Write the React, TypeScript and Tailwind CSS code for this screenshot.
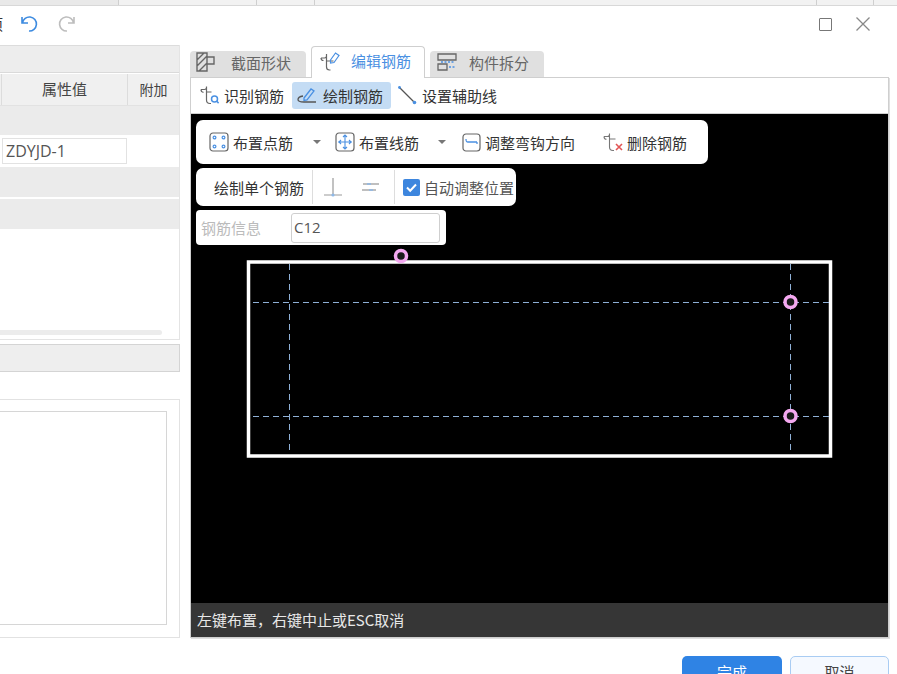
import React from 'react';

const font = { fontFamily: '"Noto Sans CJK SC", "Liberation Sans", sans-serif' };

function Rebar({ accent = '#4a90e2' }: { accent?: string }) {
  return (
    <svg width="20" height="20" viewBox="0 0 20 20" fill="none" strokeWidth="1.2">
      <path d="M1 4.5h3.5a2 2 0 0 0 2-2V1.5M1 4.5c0 2 1 2.8 2.5 2.8M6.5 1.5V15c0 2.2 1.5 3.5 3.5 3.5h1M6.5 7h5" stroke="#666" />
      <circle cx="14.5" cy="14" r="3" stroke={accent} strokeWidth="1.5" />
      <path d="M16.8 16.3l1.8 1.8" stroke={accent} strokeWidth="1.5" />
    </svg>
  );
}

function Tool({ icon, label, active }: { icon: React.ReactNode; label: string; active?: boolean }) {
  return (
    <div className={`flex items-center gap-1 h-[27px] pl-[2px] rounded-[3px] ${active ? 'bg-[#c4dcf4] pr-[8px]' : 'pr-[2px]'}`}>
      {icon}
      <span className="text-[15px] text-[#333] leading-none whitespace-nowrap">{label}</span>
    </div>
  );
}

function Caret({ className }: { className: string }) {
  return <span className={`w-0 h-0 border-x-[4px] border-x-transparent border-t-[4px] border-t-[#777] ${className}`} />;
}

// drawing on the black canvas, coordinates are the page's minus the canvas origin
function Section() {
  const pink = '#f4a8f0';
  const dash = '#8fb0d6';
  return (
    <svg className="absolute left-0 top-0" width="697" height="489" viewBox="191 114 697 489" fill="none">
      <rect x="248.5" y="262" width="582" height="194" stroke="#fff" strokeWidth="3.5" />
      <path d="M289.5 264v190M790.5 264v190M253 302.5h576M253 416.5h576" stroke={dash} strokeWidth="1" strokeDasharray="6 4" />
      <circle cx="401" cy="256" r="5.5" fill="#1a1a1a" stroke={pink} strokeWidth="3.5" />
      <circle cx="790.5" cy="302" r="5.5" fill="#1a1a1a" stroke={pink} strokeWidth="3.5" />
      <circle cx="790.5" cy="416" r="5.5" fill="#1a1a1a" stroke={pink} strokeWidth="3.5" />
    </svg>
  );
}

export default function App() {
  return (
    <div className="w-[897px] h-[674px] overflow-hidden bg-white flex flex-col" style={font}>
      {/* window behind the dialog */}
      <div className="h-[6px] bg-[#f2f2f2] border-b border-[#d8d8d8] shrink-0 flex">
        <div className="w-[118px] bg-[#e9e9e9]" />
        <div className="w-[139px] border-x border-[#cfcfcf]" />
        <div className="w-[58px] border-r border-[#cfcfcf]" />
        <div className="w-[502px] border-r border-[#cfcfcf]" />
        <div className="w-[57px] border-r border-[#cfcfcf]" />
      </div>

      {/* title bar */}
      <div className="h-[39px] shrink-0 flex items-center pb-[3px]">
        <span className="text-[15px] text-[#333] ml-[-12px] w-[32px]">项</span>
        <svg width="18" height="18" viewBox="0 0 18 18" fill="none" stroke="#3d8be0" strokeWidth="1.6">
          <path d="M2 2v6h6M2.5 8A7 7 0 1 1 9 16" />
        </svg>
        <svg className="ml-[20px]" width="18" height="18" viewBox="0 0 18 18" fill="none" stroke="#bdbdbd" strokeWidth="1.6">
          <path d="M16 2v6h-6M15.5 8A7 7 0 1 0 9 16" />
        </svg>
        <div className="ml-auto mr-[24px] w-[13px] h-[13px] border-[1.5px] border-[#777] rounded-[1px]" />
        <svg className="mr-[27px]" width="14" height="14" viewBox="0 0 14 14" stroke="#888" strokeWidth="1.3">
          <path d="M0.5 0.5l13 13M13.5 0.5l-13 13" />
        </svg>
      </div>

      {/* body */}
      <div className="h-[593px] shrink-0 flex">
        {/* properties column */}
        <div className="w-[180px] shrink-0 flex flex-col">
          <div className="h-[295px] border-r border-b border-[#e4e4e4] flex flex-col">
            <div className="h-[28px] bg-[#ededed] border-t border-[#dcdcdc] border-b border-b-[#dadada]" />
            <div className="h-[32px] mt-px bg-[#f0f0f0] flex text-[15px] text-[#444] border-b border-[#e2e2e2]">
              <div className="w-[2px] border-r border-[#dcdcdc]" />
              <div className="w-[126px] border-r border-[#dcdcdc] flex items-center justify-center">属性值</div>
              <div className="flex-1 flex items-center justify-center text-[14px]">附加</div>
            </div>
            <div className="h-[29px] bg-[#ebebeb]" />
            <div className="h-[32px] flex items-center pl-[2px]">
              <div className="w-[125px] h-[26px] border border-[#e2e2e2] px-[3px] flex items-center text-[16px] text-[#555]">
                <span style={{ fontFamily: '"Open Sans", "Liberation Sans", sans-serif' }}>ZDYJD-1</span>
              </div>
            </div>
            <div className="h-[30px] bg-[#ebebeb]" />
            <div className="h-[30px] mt-[2px] bg-[#ebebeb]" />
            <div className="mt-auto mb-[4px] h-[5px] w-[162px] bg-[#ececec] rounded-r-[3px]" />
          </div>
          <div className="h-[28px] mt-[4px] bg-[#eeeeee] border border-l-0 border-[#d4d4d4]" />
          <div className="h-[27px]" />
          <div className="flex-1 border-t border-r border-b border-[#e2e2e2] pt-[11px] pb-[12px]">
            <div className="w-[167px] h-full border-t border-r border-b border-[#d6d6d6]" />
          </div>
        </div>

        {/* section editor */}
        <div className="w-[699px] ml-[10px] shrink-0 flex flex-col">
          <div className="h-[32px] flex items-end shrink-0">
            <div className="w-[116px] h-[26px] bg-[#e0e0e0] rounded-t-[4px] flex items-center pl-[6px] pb-[4px]">
              <svg width="20" height="20" viewBox="0 0 20 20" fill="none" stroke="#666" strokeWidth="1.4">
                <path d="M1 1h10v18H1zM11 5h7v7h-7M1 8l7-7M1 14L11 4M3 19l8-8" />
              </svg>
              <span className="ml-[15px] text-[15px] text-[#666] leading-none">截面形状</span>
            </div>
            <div className="w-[114px] h-[32px] ml-[5px] bg-white border border-b-0 border-[#cfcfcf] rounded-t-[4px] flex items-center pl-[8px] pb-[4px] relative z-10 mb-[-1px]">
              <svg width="20" height="20" viewBox="0 0 20 20" fill="none" strokeWidth="1.2">
                <path d="M1 7h3.5a2 2 0 0 0 2-2V3M1 7c0 2 1 2.5 2.5 2.5M6.5 3v13c0 2 1.5 3 3 3h1M6.5 10h7" stroke="#666" />
                <path d="M10.5 9l5-7 3.5 2.5-5 7-3.5 .5z" stroke="#4a90e2" />
              </svg>
              <span className="ml-[11px] text-[15px] text-[#4a90e2] leading-none">编辑钢筋</span>
            </div>
            <div className="w-[114px] h-[26px] ml-[5px] bg-[#e0e0e0] rounded-t-[4px] flex items-center pl-[7px] pb-[4px]">
              <svg width="20" height="20" viewBox="0 0 20 20" fill="none" stroke="#666" strokeWidth="1.3">
                <path d="M1 2h18v6H1zM1 12h9v6H1z" />
                <path d="M12 15h7M4 10h14" stroke="#4a90e2" strokeDasharray="2 1.5" />
              </svg>
              <span className="ml-[12px] text-[15px] text-[#666] leading-none">构件拆分</span>
            </div>
          </div>

          <div className="flex-1 border border-[#cfcfcf] flex flex-col shadow-[1px_1px_0_#e0e0e0]">
            <div className="h-[36px] shrink-0 flex items-center pl-[7px] pb-[1px] border-b border-[#cfcfcf]">
              <Tool icon={<Rebar />} label="识别钢筋" />
              <div className="ml-[6px]">
                <Tool
                  active
                  label="绘制钢筋"
                  icon={
                    <svg className="ml-[3px] mr-[2px]" width="20" height="20" viewBox="0 0 20 20" fill="none" strokeWidth="1.3">
                      <path d="M7 13l7-9 3 2-7 9-3 .5z" stroke="#4a90e2" />
                      <path d="M6 11c-3 .5-5 2-5 3.5S3 17 7 17h12" stroke="#555" />
                    </svg>
                  }
                />
              </div>
              <div className="w-[4px]" />
              <Tool
                label="设置辅助线"
                icon={
                  <svg className="mr-px" width="20" height="20" viewBox="0 0 20 20" fill="none">
                    <path d="M2 2l16 16" stroke="#555" strokeWidth="1.3" />
                    <circle cx="2.5" cy="2.5" r="1.4" fill="#4a90e2" />
                    <circle cx="17.5" cy="17.5" r="1.8" fill="#4a90e2" />
                  </svg>
                }
              />
            </div>

            {/* black canvas */}
            <div className="flex-1 bg-black relative pl-[5px] pt-[6px] flex flex-col items-start gap-[4px] overflow-hidden">
              <Section />
              <div className="w-[512px] h-[44px] bg-white rounded-[7px] flex items-center pl-[11px] relative">
                <Tool
                  label="布置点筋"
                  icon={
                    <svg width="20" height="20" viewBox="0 0 20 20" fill="none">
                      <rect x="1" y="1" width="18" height="18" rx="3" stroke="#666" strokeWidth="1.2" />
                      <g fill="#fff" stroke="#4a90e2" strokeWidth="1.2">
                        <circle cx="5.5" cy="5.5" r="1.4" />
                        <circle cx="14.5" cy="5.5" r="1.4" />
                        <circle cx="5.5" cy="14.5" r="1.4" />
                        <circle cx="14.5" cy="14.5" r="1.4" />
                      </g>
                    </svg>
                  }
                />
                <Caret className="ml-[18px]" />
                <div className="w-[12px]" />
                <Tool
                  label="布置线筋"
                  icon={
                    <svg width="20" height="20" viewBox="0 0 20 20" fill="none">
                      <rect x="1" y="1" width="18" height="18" rx="3" stroke="#666" strokeWidth="1.2" />
                      <path d="M3 10h14M10 3v14M6 8l-2 2 2 2M14 8l2 2-2 2M8 5l2-2 2 2M8 15l2 2 2-2" stroke="#4a90e2" strokeWidth="1.1" />
                    </svg>
                  }
                />
                <Caret className="ml-[17px]" />
                <div className="w-[14px]" />
                <Tool
                  label="调整弯钩方向"
                  icon={
                    <svg width="19" height="19" viewBox="0 0 19 19" fill="none">
                      <rect x="1" y="1" width="17" height="17" rx="3" stroke="#666" strokeWidth="1.2" />
                      <path d="M4 6c0 2 0 3 2 3h9M15 9v2" stroke="#4a90e2" strokeWidth="1.3" />
                    </svg>
                  }
                />
                <div className="w-[24px]" />
                <Tool
                  label="删除钢筋"
                  icon={
                    <svg width="20" height="20" viewBox="0 0 20 20" fill="none">
                      <path d="M1 4.5h3.5a2 2 0 0 0 2-2V1.5M1 4.5c0 2 1 2.8 2.5 2.8M6.5 1.5V15c0 2.2 1.5 3.5 3.5 3.5h1M6.5 7h6" stroke="#777" strokeWidth="1.1" />
                      <path d="M13 12l6 6M19 12l-6 6" stroke="#e25555" strokeWidth="1.6" />
                    </svg>
                  }
                />
              </div>

              <div className="w-[320px] h-[38px] bg-white rounded-[7px] flex items-center relative">
                <span className="ml-[18px] text-[15px] text-[#333] leading-none whitespace-nowrap">绘制单个钢筋</span>
                <div className="ml-[8px] w-px h-[34px] bg-[#dddddd]" />
                <svg className="ml-[10px]" width="20" height="20" viewBox="0 0 20 20" fill="none">
                  <path d="M10 1v16M1 18h18" stroke="#9a9a9a" strokeWidth="1.2" />
                  <circle cx="10" cy="18" r="1.6" fill="#8db8e8" />
                </svg>
                <svg className="ml-[17px]" width="20" height="20" viewBox="0 0 20 20" fill="none" strokeWidth="1.4">
                  <path d="M3 7h16M2 13h14" stroke="#aaaaaa" />
                  <path d="M7 7h4M9 13h4" stroke="#8db8e8" />
                </svg>
                <div className="ml-[14px] w-px h-[34px] bg-[#dddddd]" />
                <div className="ml-[8px] w-[17px] h-[17px] bg-[#3d86de] rounded-[2px] flex items-center justify-center">
                  <svg width="13" height="13" viewBox="0 0 13 13" fill="none" stroke="#fff" strokeWidth="2">
                    <path d="M2 6.5l3.2 3.2L11 3.5" />
                  </svg>
                </div>
                <span className="ml-[4px] text-[15px] text-[#555] leading-none whitespace-nowrap">自动调整位置</span>
              </div>

              <div className="w-[250px] h-[35px] bg-white rounded-[4px] flex items-center relative">
                <span className="ml-[5px] text-[15px] text-[#bbbbbb] leading-none whitespace-nowrap">钢筋信息</span>
                <div className="ml-[30px] w-[149px] h-[30px] border border-[#cfcfcf] rounded-[3px] flex items-center pl-[2px] text-[15px] text-[#555]">
                  <span style={{ fontFamily: '"Open Sans", "Liberation Sans", sans-serif' }}>C12</span>
                </div>
              </div>
            </div>

            <div className="h-[34px] shrink-0 bg-[#363636] flex items-center pl-[6px] text-[15px] text-[#e8e8e8] whitespace-nowrap">
              左键布置，右键中止或ESC取消
            </div>
          </div>
        </div>
      </div>

      {/* footer buttons */}
      <div className="flex justify-end gap-[8px] pr-[8px] pt-[18px]">
        <button className="w-[100px] h-[34px] bg-[#2f83e4] rounded-[5px] text-[15px] text-white pb-[2px]">完成</button>
        <button className="w-[99px] h-[34px] bg-[#f5f9ff] border border-[#a9ccf3] rounded-[5px] text-[15px] text-[#444] pb-[2px]">取消</button>
      </div>
    </div>
  );
}
